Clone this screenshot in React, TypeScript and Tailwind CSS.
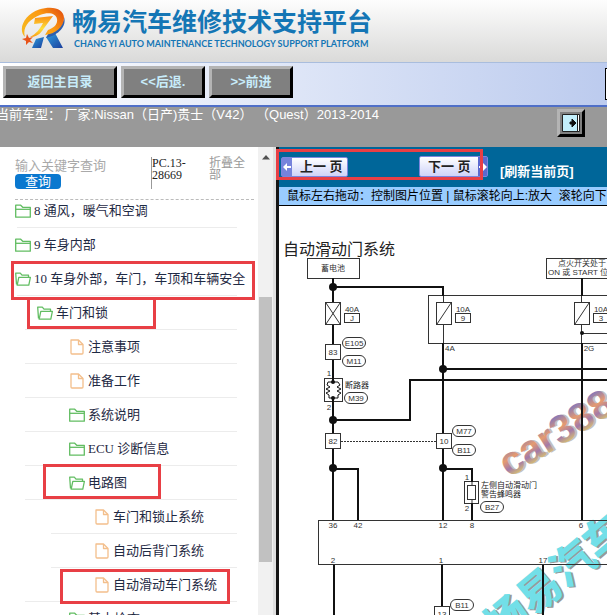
import { useState } from 'react'

const outset = 'border-[3px] border-t-[#b4b4b4] border-l-[#b4b4b4] border-r-black border-b-black bg-[#808080]'

type Row = {
  label: string
  icon: 'folder' | 'open' | 'file'
  pad: string
  line: string
  mark?: string
}

const rows: Row[] = [
  { label: '8 通风，暖气和空调', icon: 'folder', pad: 'pl-[15px]', line: 'left-[17px]' },
  { label: '9 车身内部', icon: 'folder', pad: 'pl-[15px]', line: 'left-[17px]' },
  { label: '10 车身外部，车门，车顶和车辆安全', icon: 'open', pad: 'pl-[15px]', line: 'left-[17px]', mark: 'left-[11px] w-[244px] -top-px -bottom-1' },
  { label: '车门和锁', icon: 'open', pad: 'pl-[37px]', line: 'left-[25px]', mark: 'left-[27px] w-[129px] top-px bottom-px' },
  { label: '注意事项', icon: 'file', pad: 'pl-[69px]', line: 'left-[25px]' },
  { label: '准备工作', icon: 'file', pad: 'pl-[69px]', line: 'left-[25px]' },
  { label: '系统说明', icon: 'folder', pad: 'pl-[69px]', line: 'left-[25px]' },
  { label: 'ECU 诊断信息', icon: 'folder', pad: 'pl-[69px]', line: 'left-[25px]' },
  { label: '电路图', icon: 'open', pad: 'pl-[69px]', line: 'left-[25px]', mark: 'left-[43px] w-[118px] -top-0.5 bottom-px' },
  { label: '车门和锁止系统', icon: 'file', pad: 'pl-[94px]', line: 'left-[51px]' },
  { label: '自动后背门系统', icon: 'file', pad: 'pl-[94px]', line: 'left-[51px]' },
  { label: '自动滑动车门系统', icon: 'file', pad: 'pl-[94px]', line: 'left-[25px]', mark: 'left-[60px] w-[170px] top-px -bottom-0.5' },
  { label: '基本检查', icon: 'folder', pad: 'pl-[69px]', line: 'left-[25px]' },
]

function TreeIcon({ kind }: { kind: Row['icon'] }) {
  if (kind === 'file') {
    return (
      <svg width="16" height="16" viewBox="0 0 16 16" fill="none" stroke="#f3bf8c" strokeWidth="1.3" strokeLinejoin="round">
        <path d="M2 1h7.5L14 5.500V14a1 1 0 0 1-1 1H3a1 1 0 0 1-1-1z" />
        <path d="M9.500 1v4.500H14" />
      </svg>
    )
  }
  return (
    <svg width="16" height="16" viewBox="0 0 16 16" fill="none" stroke="#62bd62" strokeWidth="1.3" strokeLinejoin="round">
      {kind === 'folder' ? (
        <>
          <path d="M.7 2.200h5l2 2.100h7.600v9.900H.7z" />
          <path d="M.7 6.300h14.600" />
        </>
      ) : (
        <>
          <path d="M1.500 13.500L.7 2.200h4.600l1.700 2h6.500v2" />
          <path d="M3.800 6.300h11.600l-1.600 7.900H2.200z" />
        </>
      )}
    </svg>
  )
}

function Logo() {
  return (
    <svg width="48" height="44" viewBox="0 0 48 44" aria-hidden="true">
      <defs>
        <linearGradient id="ring" x1="1" y1="0" x2="0" y2="0.6">
          <stop offset="0" stopColor="#e0480e" />
          <stop offset="0.5" stopColor="#fb9a12" />
          <stop offset="1" stopColor="#f7b51c" />
        </linearGradient>
        <linearGradient id="zed" x1="0" y1="0" x2="0" y2="1">
          <stop offset="0" stopColor="#fb8d12" />
          <stop offset="0.6" stopColor="#fce03a" />
          <stop offset="1" stopColor="#fb9a12" />
        </linearGradient>
        <linearGradient id="leg" x1="0" y1="0" x2="1" y2="1">
          <stop offset="0" stopColor="#2b9fe0" />
          <stop offset="1" stopColor="#1d3f9c" />
        </linearGradient>
      </defs>
      <path d="M16 33l8-2-3 11h-9z" fill="url(#leg)" />
      <path d="M26 31l9-4 8 15H33z" fill="url(#leg)" />
      <path d="M44 11c3 9-5 18-18 21l3-6c9-2 15-8 15-15z" fill="#2e5fae" />
      {/* tilted ring, heavier on its upper right side */}
      <path
        fillRule="evenodd"
        fill="url(#ring)"
        d="M5 31C-3 23 5 8 19 3.500 33-1 44 3 44 12c0 9-9 16-19 17l3-5c6-2 10-6 9-11-1-6-9-7-17-4C9 13 2 22 5 31z"
      />
      <path d="M15 12l18-2-11 15c-3 4-7 6-12 6 6-3 10-8 13-14l-9 1z" fill="url(#zed)" />
      <path d="M7 28l2 4 4-1-3 3 3 3-4-1-3 3v-4l-4-2 4-1z" fill="#e8541a" />
    </svg>
  )
}

const pills = [
  [354, 343, 'E105'],
  [354, 361, 'M11'],
  [356, 398, 'M39'],
  [464, 431, 'M77'],
  [464, 450, 'B11'],
  [492, 507, 'B27'],
  [462, 605, 'B11'],
] as const

const boxes = [
  [325, 344, '83'],
  [325, 433, '82'],
  [436, 433, '10'],
  [434, 606, '13'],
] as const

const fuses = [
  [325, '40A', 'J'],
  [436, '10A', '9'],
  [574, '10A', '3'],
] as const

const labels = [
  [329, 376, '1'],
  [329, 410, '2'],
  [450, 351, '4A'],
  [589, 351, '2G'],
  [467, 480, '1'],
  [467, 511, '2'],
  [333, 528, '36'],
  [358, 528, '42'],
  [443, 528, '12'],
  [472, 528, '8'],
  [581, 528, '6'],
  [333, 563, '2'],
  [441, 563, '1'],
  [543, 563, '17'],
] as const

function Diagram() {
  return (
    <svg
      className="h-full w-full font-['Liberation_Sans','Noto_Sans_CJK_SC',sans-serif]"
      role="img"
      aria-label="自动滑动门系统"
    >
      <defs>
        <linearGradient id="mark" x1="0" y1="0" x2="0" y2="1">
          <stop offset="0.2" stopColor="#8b7bb5" />
          <stop offset="0.45" stopColor="#e59b70" />
          <stop offset="0.65" stopColor="#a37aa8" />
          <stop offset="0.9" stopColor="#e8d860" />
        </linearGradient>
      </defs>
      <g transform="translate(-279 -206)">
        <text x="283" y="255" fontSize="16" fill="#222">自动滑动门系统</text>

        <g transform="rotate(-32 509 478)" fontSize="40" fontWeight="700">
          <text x="511" y="479" fill="#999" opacity="0.6">car388</text>
          <text x="509" y="478" fill="url(#mark)">car388</text>
        </g>
        <g transform="rotate(-40 503 648)" fontSize="43" fontWeight="900">
          <text x="504" y="645" fill="#999">畅易汽车维修</text>
          <text x="503" y="643" fill="#72dfe8">畅易汽车维修</text>
        </g>

        {/* thin outlines */}
        <g fill="none" stroke="#333" strokeWidth="1">
          <rect x="307.500" y="258.500" width="52" height="20" />
          <rect x="546.500" y="258.500" width="72" height="20" />
          <rect x="428.500" y="295.500" width="900" height="48" />
          <rect x="318.500" y="520.500" width="900" height="44" />
          <path d="M443.500 295V343M581.500 295V343M581 333.500H1200" />
          <path d="M341 441.500H436" strokeDasharray="2 1" />
          <rect x="324.500" y="378.500" width="18" height="23" />
          <rect x="464.500" y="481.500" width="14" height="22" />
          <path d="M333 382h-5l-1 3 3 2-4 2 4 2-4 2 3 2v3h4M333 382h5l2 3-3 2 4 2-4 2 4 2-3 2v3h-5" stroke="#111" />
          <path d="M472 481v22" />
        </g>
        <rect x="467.500" y="485.500" width="8" height="14" fill="#fff" stroke="#333" />

        {/* wires */}
        <g fill="none" stroke="#111" strokeWidth="2">
          <path d="M333 278V302M333 324V382M333 398V520M333 287H443V296" />
          <path d="M443 343V520M582 278V296M582 343V520" />
          <path d="M443 369H1200M333 420H410V380H1200" />
          <path d="M333 469H358V520M443 469H472V482M472 503V520" />
          <path d="M334 565V1200M442 565V606M543 565V1200" />
        </g>
        <g fill="#111">
          <circle cx="333" cy="287" r="4" />
          <circle cx="333" cy="420" r="4" />
          <circle cx="333" cy="468" r="4" />
          <circle cx="443" cy="369" r="4" />
          <circle cx="443" cy="468" r="4" />
          <circle cx="582" cy="333" r="2" />
          <circle cx="333" cy="382" r="2" />
          <circle cx="333" cy="398" r="2" />
        </g>

        <g fontSize="8" fill="#333" textAnchor="middle">
          {fuses.map(([x, amp, id]) => (
            <g key={x}>
              <rect x={x + 0.5} y="302.500" width="15" height="22" fill="#fff" stroke="#333" />
              <path d={`M${x + 1} 324L${x + 15} 303`} stroke="#333" />
              {id === 'J' && <path d={`M${x + 1} 303L${x + 15} 324`} stroke="#333" />}
              <text x={x + 27} y="312">{amp}</text>
              <rect x={x + 19.5} y="313.500" width="15" height="9" fill="none" stroke="#333" />
              <text x={x + 27} y="321">{id}</text>
            </g>
          ))}
          {boxes.map(([x, y, t]) => (
            <g key={t}>
              <rect x={x + 0.5} y={y + 0.5} width="15" height="15" fill="#fff" stroke="#333" />
              <text x={x + 8} y={y + 11}>{t}</text>
            </g>
          ))}
          {pills.map(([x, y, t]) => (
            <g key={`${t}-${y}`}>
              <rect x={x - 11.5} y={y - 5.5} width="23" height="11" rx="5.500" fill="#fff" stroke="#333" />
              <text x={x} y={y + 3}>{t}</text>
            </g>
          ))}
          {labels.map(([x, y, t]) => (
            <text key={`${x}-${y}`} x={x} y={y}>{t}</text>
          ))}
          <text x="333" y="271">蓄电池</text>
          <text x="582" y="266">点火开关处于</text>
          <text x="548" y="275" textAnchor="start">ON 或 START 位</text>
        </g>
        <g fontSize="8" fill="#222">
          <text x="345" y="388">断路器</text>
          <text x="481" y="488">左侧自动滑动门</text>
          <text x="481" y="497">警告蜂鸣器</text>
        </g>
      </g>
    </svg>
  )
}

function Sidebar() {
  const [keyword, setKeyword] = useState('')

  return (
    <aside className="flex w-[276px] shrink-0 border-r-3 border-[#e0e0e0] bg-white font-['Liberation_Serif','Noto_Sans_CJK_SC',serif]">
      <div className="flex min-w-0 flex-1 flex-col">
        <form className="mr-1 ml-[15px] flex h-[53px] shrink-0 border-b border-dashed border-[#bbb] pt-2.5">
          <div className="w-[136px]">
            <input
              aria-label="关键字"
              placeholder="输入关键字查询"
              value={keyword}
              onChange={(e) => setKeyword(e.target.value)}
              className="block h-[17px] w-full text-[13px] leading-[17px] outline-none placeholder:text-[#a9a9a9]"
            />
            <button
              type="button"
              className="block h-[15px] w-[46px] rounded-[4px] bg-[#0a78cf] text-[13px] leading-[14px] text-white"
            >
              查询
            </button>
          </div>
          <div className="h-8 w-[58px] border-l border-[#999] text-xs leading-3 text-[#222]">
            PC.13-28669
          </div>
          <button type="button" className="h-6 w-9 text-left text-xs leading-3 text-[#999]">
            折叠全部
          </button>
        </form>
        <div className="min-h-0 flex-1 overflow-hidden">
          <ul className="-mt-1.5">
            {rows.map((r) => (
              <li key={r.label} className="relative h-[34px]">
                <a
                  href="#"
                  className={`flex h-[33px] items-center gap-[3px] text-[13px] leading-4 whitespace-nowrap text-[#1f2a44] ${r.pad}`}
                >
                  <TreeIcon kind={r.icon} />
                  <span>{r.label}</span>
                </a>
                <span className={`absolute right-[21px] bottom-0 h-px bg-[#ececec] ${r.line}`} />
                {r.mark && <span className={`absolute z-10 border-3 border-[#e83f45] ${r.mark}`} />}
              </li>
            ))}
          </ul>
        </div>
      </div>
      {/* scrollbar */}
      <div className="flex w-[15px] flex-col items-center bg-[#f1f1f1]">
        <svg width="8" height="5" viewBox="0 0 8 5" className="mt-2 shrink-0">
          <path d="M0 4.500L4 0l4 4.500z" fill="#505050" />
        </svg>
        <div className="mt-[137px] h-[265px] w-[13px] shrink-0 bg-[#c1c1c1]" />
      </div>
    </aside>
  )
}

export default function App() {
  return (
    <div className="flex h-screen flex-col overflow-hidden bg-white font-['Liberation_Sans','Noto_Sans_CJK_SC',sans-serif]">
      <header className="flex h-[62px] shrink-0 bg-linear-to-b from-[#fdfdfd] to-[#dadad9] pt-1.5 pl-5">
        <Logo />
        <div className="ml-1 whitespace-nowrap text-[#1476b5]">
          <h1 className="text-[25px] leading-[33px] font-bold">畅易汽车维修技术支持平台</h1>
          <p className="pl-0.5 font-['Lato'] text-[9px] leading-[10px] font-bold">
            CHANG YI AUTO MAINTENANCE TECHNOLOGY SUPPORT PLATFORM
          </p>
        </div>
      </header>

      <nav className="flex h-[45px] shrink-0 items-start gap-1 border-t border-b-2 border-t-[#a9bddd] border-b-[#4f6fc8] bg-linear-to-r from-white to-[#bccbee] pt-[3px] pl-[3px] text-[13px] font-bold text-[#c8ecfa]">
        <button type="button" className={`h-8 w-[114px] ${outset}`}>返回主目录</button>
        <button type="button" className={`h-8 w-[84px] ${outset}`}>&lt;&lt;后退.</button>
        <button type="button" className={`h-8 w-[84px] ${outset}`}>&gt;&gt;前进</button>
        <span className="mt-0.5 ml-auto h-8 w-0.5 border border-r-0 border-black bg-white" />
      </nav>

      <div className="flex h-10 shrink-0 items-start justify-between bg-[#999] pr-[22px]">
        <p className="-ml-1 text-[13px] leading-4 whitespace-pre text-white">
          当前车型： 厂家:Nissan（日产)贵士（V42） （Quest）2013-2014
        </p>
        <button
          type="button"
          aria-label="展开"
          className={`mt-0.5 flex h-7 w-7 items-center justify-center ${outset}`}
        >
          <svg width="18" height="18" viewBox="0 0 18 18">
            <path d="M.5.500h17v17H.5z" fill="#c3effb" stroke="#222" />
            <path d="M15.500 1v16" stroke="#222" />
            <path d="M16.500 1v16" stroke="#fff" />
            <path d="M8 8h2V5l4 4-4 4v-3H8z" fill="#111" stroke="#111" />
          </svg>
        </button>
      </div>

      <div className="flex min-h-0 flex-1">
        <Sidebar />
        <main className="flex min-w-0 flex-1 flex-col border-l-3 border-[#151515]">
          <div className="relative flex h-10 shrink-0 items-start bg-[#069] pt-[9px] pl-0.5 text-[13px] whitespace-nowrap">
            <button
              type="button"
              className="mt-px flex h-5 w-[67px] items-center rounded-xs border border-[#7b86dd] bg-linear-to-b from-white to-[#cfd3f8] font-bold text-[#222]"
            >
              <span className="flex h-full w-[10px] items-center justify-center bg-[#7683dc]">
                <svg width="8" height="8" viewBox="0 0 8 8">
                  <path d="M0 4l4-4v3h4v2H4v3z" fill="#fff" />
                </svg>
              </span>
              <span className="pl-2">上一 页</span>
            </button>
            <button
              type="button"
              className="ml-[71px] flex h-[21px] w-[69px] items-center rounded-xs border border-[#7b86dd] bg-linear-to-b from-white to-[#cfd3f8] font-bold text-[#222]"
            >
              <span className="flex-1 pl-2 text-left">下一 页</span>
              <span className="flex h-full w-[9px] items-center justify-center bg-[#5b69cf]">
                <svg width="8" height="8" viewBox="0 0 8 8">
                  <path d="M8 4L4 0v3H0v2h4v3z" fill="#fff" />
                </svg>
              </span>
            </button>
            <a href="#" className="mt-1.5 ml-3 leading-5 font-bold text-white">[刷新当前页]</a>
            <span className="absolute top-0.5 -left-[3px] h-[31px] w-[207px] border-3 border-[#e83f45]" />
          </div>
          <p className="h-[19px] shrink-0 overflow-hidden border-b border-black bg-[#9cf] pl-2 text-xs leading-[19px] whitespace-pre text-black">
            鼠标左右拖动：控制图片位置 | 鼠标滚轮向上:放大  滚轮向下
          </p>
          <div className="min-h-0 flex-1 overflow-hidden bg-white">
            <Diagram />
          </div>
        </main>
      </div>
    </div>
  )
}
